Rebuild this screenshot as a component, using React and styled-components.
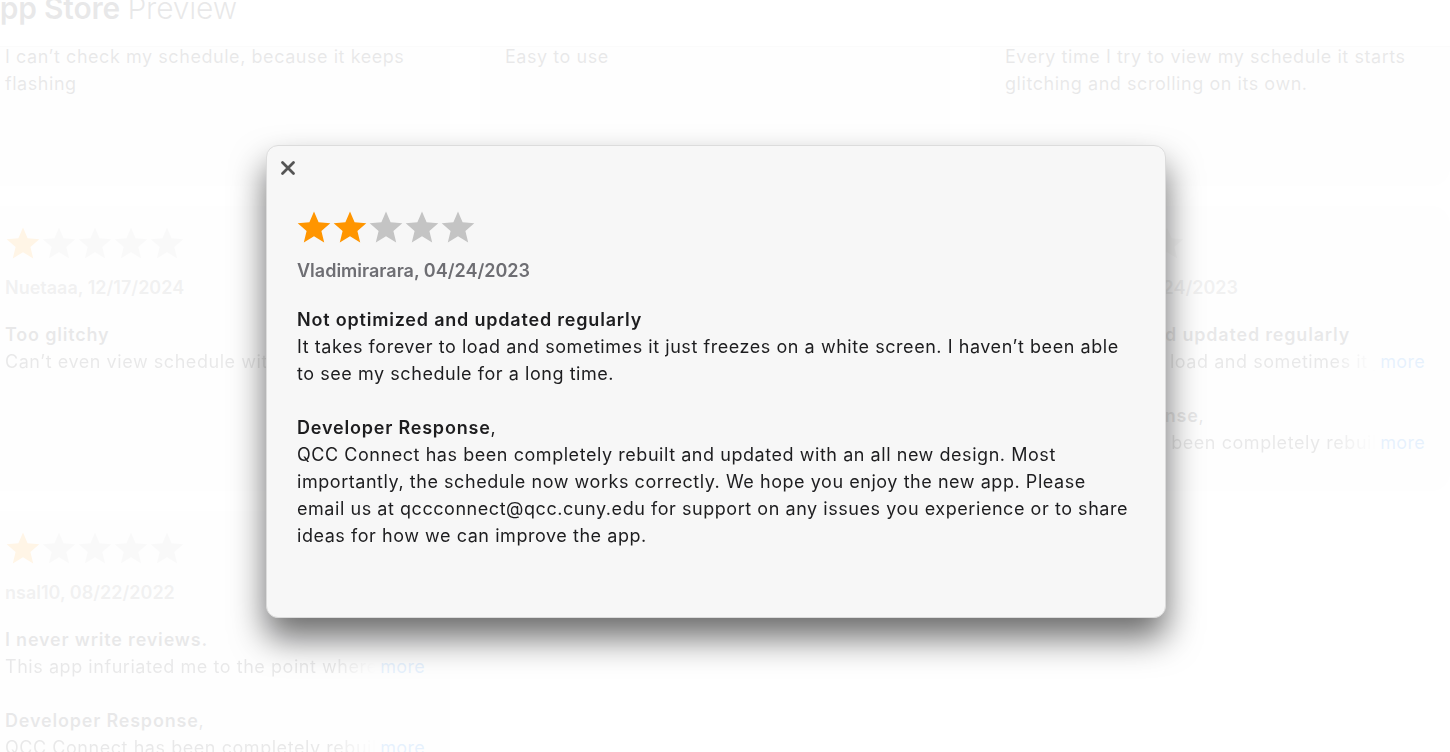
import React from 'react';
import styled, { createGlobalStyle } from 'styled-components';

const GlobalStyle = createGlobalStyle`
  html, body {
    margin: 0;
    padding: 0;
    background: #ffffff;
    overflow: hidden;
  }
  body {
    font-family: Inter, "Noto Sans", "Liberation Sans", sans-serif;
    color: #1d1d1f;
  }
`;

const Page = styled.div`
  height: 100vh;
  display: flex;
  flex-direction: column;
  overflow: hidden;
`;

const TopBar = styled.header`
  height: 46px;
  flex-shrink: 0;
  background: #ffffff;
  border-bottom: 1px solid #d2d2d7;
  overflow: hidden;
`;

const PageTitle = styled.h1`
  margin: -7px 0 0 -22px;
  font-size: 30px;
  line-height: 30px;
  font-weight: 600;
  letter-spacing: -0.2px;
  color: #1d1d1f;
  white-space: nowrap;

  span {
    font-weight: 300;
  }
`;

const Viewport = styled.main`
  flex: 1;
  overflow: hidden;
`;

const ReviewGrid = styled.div`
  display: grid;
  grid-template-columns: repeat(3, 470px);
  grid-auto-rows: 285px;
  column-gap: 30px;
  row-gap: 20px;
  margin: -146px 0 0 -20px;
`;

const Card = styled.article`
  background: #f2f2f4;
  border-radius: 18px;
  padding: 20px 25px;
  box-sizing: border-box;
  overflow: hidden;
  visibility: ${(p) => (p.$empty ? 'hidden' : 'visible')};
`;

const StarRow = styled.div`
  display: flex;
  height: 36px;
`;

const Name = styled.div`
  margin-top: ${(p) => p.$gap}px;
  font-size: 18px;
  line-height: 27px;
  font-weight: 600;
  color: #6e6e73;
`;

const Title = styled.div`
  margin-top: ${(p) => p.$gap}px;
  font-size: 18px;
  line-height: 27px;
  font-weight: 600;
  letter-spacing: 0.8px;
  color: #1d1d1f;
`;

const Body = styled.div`
  font-size: 18px;
  line-height: 27px;
  letter-spacing: 0.55px;
  color: #1d1d1f;
`;

const ClampLine = styled.div`
  display: flex;
  font-size: 18px;
  line-height: 27px;
  letter-spacing: 0.55px;
  color: #1d1d1f;
`;

const ClampText = styled.span`
  flex: 1;
  min-width: 0;
  white-space: nowrap;
  overflow: hidden;
  -webkit-mask-image: linear-gradient(to right, #000 calc(100% - 44px), transparent);
  mask-image: linear-gradient(to right, #000 calc(100% - 44px), transparent);
`;

const MoreLink = styled.a`
  color: #0071e3;
  text-decoration: none;
  margin-left: 4px;
  letter-spacing: 0.3px;
`;

const DevBlock = styled.div`
  margin-top: 27px;
`;

const DevLabel = styled.div`
  font-size: 18px;
  line-height: 27px;
  letter-spacing: 0.55px;
  color: #1d1d1f;

  b {
    font-weight: 600;
    letter-spacing: 0.8px;
  }
`;

const Scrim = styled.div`
  position: fixed;
  inset: 0;
  background: rgba(255, 255, 255, 0.9);
  display: flex;
  align-items: flex-start;
  padding: 145px 0 0 266px;
  box-sizing: border-box;
`;

const Modal = styled.div`
  width: 900px;
  height: 473px;
  box-sizing: border-box;
  padding: 10px 30px;
  background: #f7f7f7;
  border: 1px solid #dcdcdc;
  border-radius: 12px;
  box-shadow: 0 20px 34px rgba(0, 0, 0, 0.58);
`;

const CloseButton = styled.button`
  width: 24px;
  height: 24px;
  margin-left: -21px;
  padding: 0;
  border: none;
  background: none;
  display: flex;
  align-items: center;
  justify-content: center;
  cursor: pointer;
`;

const ModalStars = styled(StarRow)`
  margin-top: 30px;
  margin-left: -1px;
`;

const Star = ({ on }) => (
  <svg width="36" height="36" viewBox="0 0 36 36">
    <polygon
      points="18,1.5 22.6,12.3 34.3,13.2 25.4,20.9 28.2,32.4 18,26.2 7.8,32.4 10.6,20.9 1.7,13.2 13.4,12.3"
      fill={on ? '#ff9500' : '#c4c4c4'}
    />
  </svg>
);

const Stars = ({ rating, as: Row = StarRow }) => (
  <Row>
    {[1, 2, 3, 4, 5].map((i) => (
      <Star key={i} on={i <= rating} />
    ))}
  </Row>
);

const DEV_RESPONSE =
  'QCC Connect has been completely rebuilt and updated with an all new design. Most importantly, the schedule now works correctly. We hope you enjoy the new app. Please email us at qccconnect@qcc.cuny.edu for support on any issues you experience or to share ideas for how we can improve the app.';

const reviews = [
  { rating: 1, name: 'jenny.q, 02/11/2024', title: 'Keeps flashing', body: 'I can’t check my schedule, because it keeps flashing' },
  { rating: 5, name: 'qccstudent, 09/05/2023', title: 'Great', body: 'Easy to use' },
  { rating: 1, name: 'Marco_T, 03/02/2023', title: 'Glitching', body: 'Every time I try to view my schedule it starts glitching and scrolling on its own.' },
  { rating: 1, name: 'Nuetaaa, 12/17/2024', title: 'Too glitchy', body: 'Can’t even view schedule without it glitching and closing', clamp: true },
  { rating: 3, name: 'kev.r, 10/30/2023', title: 'Needs work', body: 'Works most of the time but logging in again every day is annoying', clamp: true },
  { rating: 2, name: 'Vladimirarara, 04/24/2023', title: 'Not optimized and updated regularly', body: 'It takes forever to load and sometimes it just freezes on a white screen.', clamp: true, dev: true },
  { rating: 1, name: 'nsal10, 08/22/2022', title: 'I never write reviews.', body: 'This app infuriated me to the point where I had to write one.', clamp: true, dev: true },
  { empty: true },
  { empty: true },
];

const ReviewCard = ({ review }) => {
  if (review.empty) return <Card $empty />;
  return (
    <Card>
      <Stars rating={review.rating} />
      <Name $gap={12}>{review.name}</Name>
      <Title $gap={20}>{review.title}</Title>
      {review.clamp ? (
        <ClampLine>
          <ClampText>{review.body}</ClampText>
          <MoreLink href="#">more</MoreLink>
        </ClampLine>
      ) : (
        <Body>{review.body}</Body>
      )}
      {review.dev && (
        <DevBlock>
          <DevLabel>
            <b>Developer Response</b>,
          </DevLabel>
          <ClampLine>
            <ClampText>{DEV_RESPONSE}</ClampText>
            <MoreLink href="#">more</MoreLink>
          </ClampLine>
        </DevBlock>
      )}
    </Card>
  );
};

const App = () => (
  <>
    <GlobalStyle />
    <Page>
      <TopBar>
        <PageTitle>
          App Store <span>Preview</span>
        </PageTitle>
      </TopBar>
      <Viewport>
        <ReviewGrid>
          {reviews.map((r, i) => (
            <ReviewCard key={i} review={r} />
          ))}
        </ReviewGrid>
      </Viewport>
    </Page>
    <Scrim>
      <Modal role="dialog">
        <CloseButton aria-label="Close">
          <svg width="16" height="16" viewBox="0 0 16 16">
            <path d="M2.5 2.5 L13.5 13.5 M13.5 2.5 L2.5 13.5" stroke="#555555" strokeWidth="2.8" strokeLinecap="round" />
          </svg>
        </CloseButton>
        <Stars rating={2} as={ModalStars} />
        <Name $gap={11}>Vladimirarara, 04/24/2023</Name>
        <Title $gap={22}>Not optimized and updated regularly</Title>
        <Body>
          It takes forever to load and sometimes it just freezes on a white screen. I haven’t been able to see my schedule for a long time.
        </Body>
        <DevBlock>
          <DevLabel>
            <b>Developer Response</b>,
          </DevLabel>
          <Body>{DEV_RESPONSE}</Body>
        </DevBlock>
      </Modal>
    </Scrim>
  </>
);

export default App;
